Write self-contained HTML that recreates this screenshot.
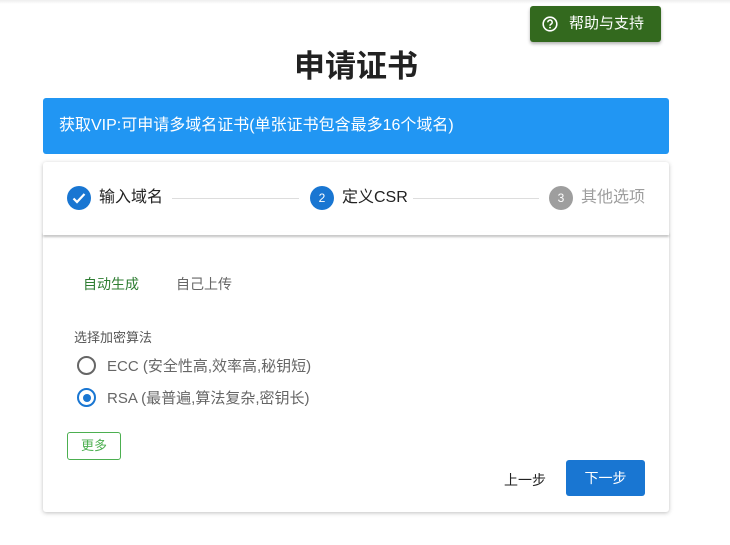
<!DOCTYPE html>
<html><head><meta charset="utf-8"><style>
body{margin:0;width:730px;height:545px;background:#fff;font-family:"Liberation Sans","Noto Sans CJK SC",sans-serif;position:relative;overflow:hidden}
.a{position:absolute}
</style></head><body>
<div class="a" style="left:0;top:0;width:730px;height:4px;background:linear-gradient(#eee,#fff)"></div>
<div class="a" style="left:530px;top:6px;width:131px;height:36px;background:#33691e;border-radius:3px;box-shadow:0 2px 3px rgba(0,0,0,.3);color:#fff;font-size:15px;line-height:36px">
<svg class="a" style="left:12px;top:10px" width="16" height="16" viewBox="0 0 16 16"><circle cx="8" cy="8" r="6.8" fill="none" stroke="#fff" stroke-width="1.6"/><path d="M5.8 6.3a2.2 2.2 0 1 1 3 2c-.6.3-.8.7-.8 1.4" fill="none" stroke="#fff" stroke-width="1.5"/><circle cx="8" cy="11.6" r=".9" fill="#fff"/></svg>
<span class="a" style="left:39px;top:0">帮助与支持</span></div>
<div class="a" style="left:0;width:712px;top:44px;text-align:center;font-size:31px;font-weight:bold;color:#222;line-height:46px">申请证书</div>
<div class="a" style="left:43px;top:98px;width:626px;height:56px;background:#2196f3;border-radius:3px;color:#fff;font-size:16px;line-height:56px"><span style="padding-left:16px">获取VIP:可申请多域名证书(单张证书包含最多16个域名)</span></div>
<div class="a" style="left:43px;top:162px;width:626px;height:350px;background:#fff;border-radius:3px;box-shadow:0 1px 4px rgba(0,0,0,.25)"></div>
<div class="a" style="left:43px;top:232px;width:626px;height:3px;box-shadow:0 2px 2px rgba(0,0,0,.25);background:#fff"></div>
<div class="a" style="left:67px;top:186px;width:24px;height:24px;border-radius:50%;background:#1976d2"><svg width="24" height="24"><path d="M6.5 12.5l3.5 3.5 7.5-8" fill="none" stroke="#fff" stroke-width="2.2"/></svg></div>
<div class="a" style="left:99px;top:186px;font-size:16px;line-height:24px;color:#222">输入域名</div>
<div class="a" style="left:172px;top:198px;width:127px;height:1px;background:#ddd"></div>
<div class="a" style="left:310px;top:186px;width:24px;height:24px;border-radius:50%;background:#1976d2;color:#fff;font-size:12px;text-align:center;line-height:24px">2</div>
<div class="a" style="left:342px;top:186px;font-size:16px;line-height:24px;color:#222">定义CSR</div>
<div class="a" style="left:413px;top:198px;width:126px;height:1px;background:#ddd"></div>
<div class="a" style="left:549px;top:186px;width:24px;height:24px;border-radius:50%;background:#9e9e9e;color:#fff;font-size:12px;text-align:center;line-height:24px">3</div>
<div class="a" style="left:581px;top:186px;font-size:16px;line-height:24px;color:#9e9e9e">其他选项</div>
<div class="a" style="left:83px;top:274px;font-size:14px;color:#2e7d32">自动生成</div>
<div class="a" style="left:176px;top:274px;font-size:14px;color:#666">自己上传</div>
<div class="a" style="left:74px;top:327px;font-size:13px;color:#555">选择加密算法</div>
<div class="a" style="left:77px;top:356px;width:15px;height:15px;border:2px solid #666;border-radius:50%"></div>
<div class="a" style="left:107px;top:355px;font-size:15px;color:#666">ECC (安全性高,效率高,秘钥短)</div>
<div class="a" style="left:77px;top:388px;width:15px;height:15px;border:2px solid #1976d2;border-radius:50%"><div style="margin:3.5px;width:8px;height:8px;border-radius:50%;background:#1976d2"></div></div>
<div class="a" style="left:107px;top:387px;font-size:15px;color:#666">RSA (最普遍,算法复杂,密钥长)</div>
<div class="a" style="left:67px;top:432px;width:52px;height:26px;border:1px solid #4caf50;border-radius:3px;color:#4caf50;font-size:13px;text-align:center;line-height:26px">更多</div>
<div class="a" style="left:504px;top:470px;font-size:14px;color:#222">上一步</div>
<div class="a" style="left:566px;top:460px;width:79px;height:36px;background:#1976d2;border-radius:3px;color:#fff;font-size:14px;text-align:center;line-height:36px">下一步</div>
</body></html>
